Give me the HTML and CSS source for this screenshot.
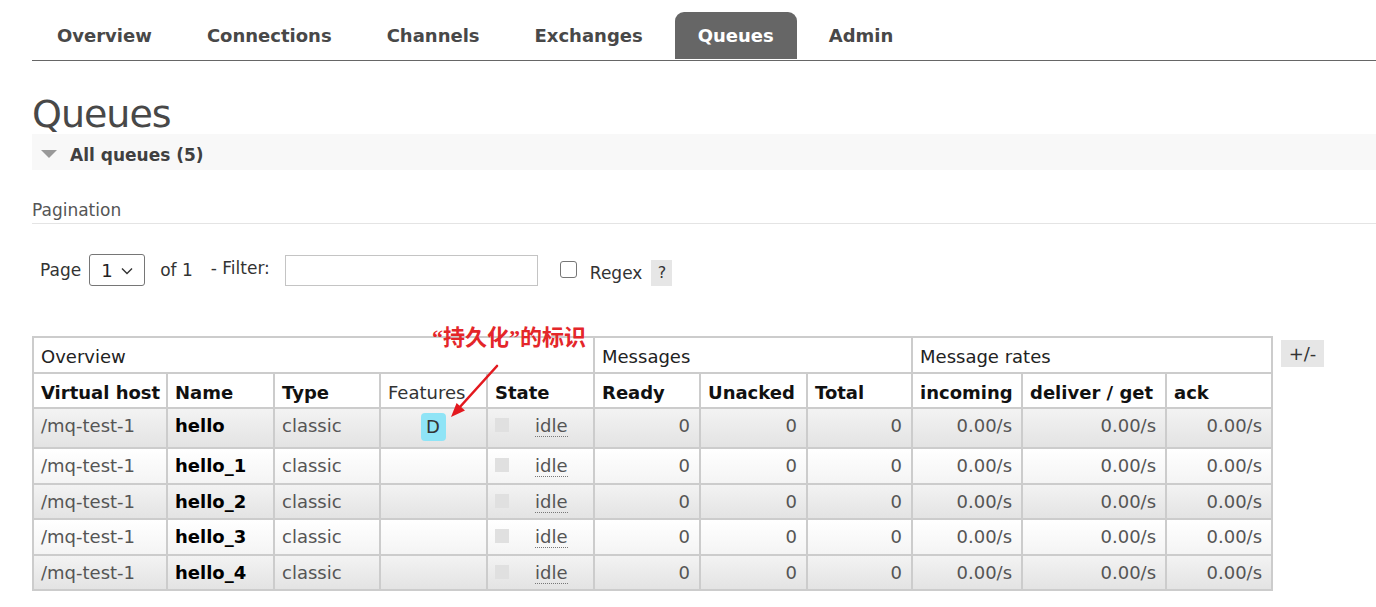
FILE: index.html
```html
<!DOCTYPE html>
<html lang="en">
<head>
<meta charset="utf-8">
<title>Queues</title>
<link rel="stylesheet" href="styles.css">
</head>
<body>
<div class="page">
  <nav class="tabs">
    <a class="tab">Overview</a>
    <a class="tab">Connections</a>
    <a class="tab">Channels</a>
    <a class="tab">Exchanges</a>
    <a class="tab active">Queues</a>
    <a class="tab">Admin</a>
  </nav>

  <h1 class="title">Queues</h1>

  <div class="section-bar"><span class="tri"></span><span class="section-title">All queues (5)</span></div>

  <h3 class="pag-title">Pagination</h3>

  <div class="filter-row">
    <span class="lbl page-lbl">Page</span>
    <span class="select"><span class="sel-val">1</span><svg class="chev" width="12" height="8" viewBox="0 0 12 8"><polyline points="1,1.5 6,6.5 11,1.5" fill="none" stroke="#333" stroke-width="1.4"/></svg></span>
    <span class="lbl of-lbl">of 1</span>
    <span class="lbl filter-lbl">- Filter:</span>
    <span class="input"></span>
    <span class="checkbox"></span>
    <span class="lbl regex-lbl">Regex</span>
    <span class="help">?</span>
  </div>

  <div class="table-wrap">
    <table class="list">
      <colgroup>
        <col class="c-vhost"><col class="c-name"><col class="c-type"><col class="c-feat"><col class="c-state">
        <col class="c-ready"><col class="c-unacked"><col class="c-total">
        <col class="c-in"><col class="c-deliver"><col class="c-ack">
      </colgroup>
      <thead>
        <tr class="group">
          <th colspan="5">Overview</th>
          <th colspan="3">Messages</th>
          <th colspan="3">Message rates</th>
        </tr>
        <tr>
          <th>Virtual host</th><th>Name</th><th>Type</th><th class="plain">Features</th><th>State</th>
          <th>Ready</th><th>Unacked</th><th>Total</th>
          <th>incoming</th><th>deliver / get</th><th>ack</th>
        </tr>
      </thead>
      <tbody>
        <tr>
          <td>/mq-test-1</td><td class="qname">hello</td><td>classic</td>
          <td class="feat"><span class="badge">D</span></td>
          <td><span class="sq"></span><span class="idle">idle</span></td>
          <td class="num">0</td><td class="num">0</td><td class="num">0</td>
          <td class="num">0.00/s</td><td class="num">0.00/s</td><td class="num">0.00/s</td>
        </tr>
        <tr>
          <td>/mq-test-1</td><td class="qname">hello_1</td><td>classic</td>
          <td class="feat"></td>
          <td><span class="sq"></span><span class="idle">idle</span></td>
          <td class="num">0</td><td class="num">0</td><td class="num">0</td>
          <td class="num">0.00/s</td><td class="num">0.00/s</td><td class="num">0.00/s</td>
        </tr>
        <tr>
          <td>/mq-test-1</td><td class="qname">hello_2</td><td>classic</td>
          <td class="feat"></td>
          <td><span class="sq"></span><span class="idle">idle</span></td>
          <td class="num">0</td><td class="num">0</td><td class="num">0</td>
          <td class="num">0.00/s</td><td class="num">0.00/s</td><td class="num">0.00/s</td>
        </tr>
        <tr>
          <td>/mq-test-1</td><td class="qname">hello_3</td><td>classic</td>
          <td class="feat"></td>
          <td><span class="sq"></span><span class="idle">idle</span></td>
          <td class="num">0</td><td class="num">0</td><td class="num">0</td>
          <td class="num">0.00/s</td><td class="num">0.00/s</td><td class="num">0.00/s</td>
        </tr>
        <tr>
          <td>/mq-test-1</td><td class="qname">hello_4</td><td>classic</td>
          <td class="feat"></td>
          <td><span class="sq"></span><span class="idle">idle</span></td>
          <td class="num">0</td><td class="num">0</td><td class="num">0</td>
          <td class="num">0.00/s</td><td class="num">0.00/s</td><td class="num">0.00/s</td>
        </tr>
      </tbody>
    </table>
    <span class="toggle">+/-</span>
  </div>

  <div class="note"><span class="q">“</span>持久化<span class="q">”</span>的标识</div>
  <svg class="arrow" width="66" height="66" viewBox="0 0 66 66">
    <line x1="57" y1="6" x2="19" y2="48" stroke="#e3191f" stroke-width="2.6" stroke-linecap="round"/>
    <polygon points="11,57 25,50.6 16.6,43" fill="#e3191f"/>
  </svg>
</div>
</body>
</html>
```

FILE: styles.css
```css
* { box-sizing: border-box; }

html, body {
  margin: 0;
  padding: 0;
  background: #fff;
}

body {
  font-family: "DejaVu Sans", Verdana, sans-serif;
  color: #484848;
}

.page {
  position: relative;
  padding: 12px 0 0 32px;
  height: 607px;
  overflow: hidden;
}

/* ---------- tabs ---------- */
.tabs {
  display: flex;
  height: 49px;
  padding-left: 2px;
  border-bottom: 1px solid #666;
}

.tab {
  display: block;
  height: 48px;
  padding: 0 23px;
  margin-right: 9px;
  font-size: 18px;
  font-weight: bold;
  line-height: 48px;
  color: #484848;
}

.tab.active {
  background: #666;
  color: #fff;
  border-radius: 9px 9px 0 0;
  height: 47px;
}

/* ---------- title ---------- */
.title {
  margin: 33px 0 0;
  font-size: 38px;
  font-weight: normal;
  letter-spacing: -1px;
  line-height: 40px;
  color: #484848;
}

.section-bar {
  display: flex;
  align-items: center;
  height: 36px;
  padding-top: 6px;
  background: #f8f8f8;
}

.tri {
  width: 0;
  height: 0;
  margin: -3px 13px 0 9px;
  border-left: 8px solid transparent;
  border-right: 8px solid transparent;
  border-top: 8px solid #999;
}

.section-title {
  font-size: 17px;
  font-weight: bold;
  line-height: 20px;
  color: #404040;
}

.pag-title {
  margin: 30px 0 0;
  padding-bottom: 3px;
  font-size: 17px;
  font-weight: normal;
  line-height: 20px;
  color: #555;
  border-bottom: 1px solid #e4e4e4;
}

/* ---------- filter row ---------- */
.filter-row {
  display: flex;
  align-items: center;
  height: 32px;
  margin-top: 30px;
  font-size: 17px;
  color: #333;
}

.lbl { line-height: 20px; }
.page-lbl { margin-left: 8px; }

.select {
  display: flex;
  align-items: center;
  justify-content: space-between;
  width: 56px;
  height: 32px;
  margin-left: 8px;
  padding: 0 11px 0 11px;
  border: 1px solid #767676;
  border-radius: 3px;
  background: #fff;
  font-size: 18px;
  color: #222;
}

.chev { margin-top: 2px; }

.of-lbl { margin-left: 15px; }
.filter-lbl { margin-left: 18px; margin-bottom: 5px; }

.input {
  width: 253px;
  height: 31px;
  margin-left: 15px;
  border: 1px solid #c4c4c4;
  background: #fff;
}

.checkbox {
  width: 17px;
  height: 17px;
  margin-left: 22px;
  margin-bottom: 2px;
  border: 1px solid #767676;
  border-radius: 3px;
  background: #fff;
}

.regex-lbl { margin-left: 13px; margin-top: 6px; }

.help {
  width: 21px;
  height: 26px;
  margin-left: 9px;
  margin-top: 6px;
  background: #e6e6e6;
  font-size: 16px;
  line-height: 26px;
  text-align: center;
  color: #333;
}

/* ---------- table ---------- */
.table-wrap {
  display: flex;
  align-items: flex-start;
  margin-top: 50px;
}

.list {
  border-collapse: collapse;
  table-layout: fixed;
  width: 1239px;
  font-size: 18px;
}

.c-vhost { width: 134px; }
.c-name { width: 107px; }
.c-type { width: 106px; }
.c-feat { width: 107px; }
.c-state { width: 107px; }
.c-ready { width: 106px; }
.c-unacked { width: 107px; }
.c-total { width: 105px; }
.c-in { width: 110px; }
.c-deliver { width: 144px; }
.c-ack { width: 106px; }

.list th,
.list td {
  border: 2px solid #ccc;
  padding: 6px 9px 6px 7px;
  line-height: 21.5px;
  text-align: left;
  vertical-align: top;
  white-space: nowrap;
  overflow: hidden;
}

.list th {
  padding-top: 8px;
  padding-bottom: 4px;
  background: #fff;
  font-weight: bold;
  color: #111;
}

.list tr.group th {
  font-weight: normal;
  color: #222;
}

.list th.plain {
  font-weight: normal;
  color: #333;
}

.list td {
  color: #555;
}

.list tbody tr:nth-child(odd) td {
  background: linear-gradient(#f3f3f3, #e3e3e3);
}

.list tbody tr:nth-child(even) td {
  background: linear-gradient(#fff, #f4f4f4);
}

.list td.qname {
  font-weight: bold;
  color: #000;
}

.list td.num { text-align: right; }
.list td.feat { text-align: center; }

.badge {
  display: inline-block;
  vertical-align: top;
  width: 25px;
  height: 28px;
  margin-top: -2px;
  margin-left: 1px;
  line-height: 28px;
  text-align: center;
  background: #8fe4f6;
  border-radius: 4px;
  color: #333;
}

.sq {
  display: inline-block;
  width: 14px;
  height: 14px;
  margin-right: 26px;
  background: #e0e0e0;
}

.idle {
  border-bottom: 1px dotted #777;
}

.toggle {
  width: 43px;
  height: 27px;
  margin: 4px 0 0 8px;
  background: #e6e6e6;
  font-size: 18px;
  line-height: 27px;
  text-align: center;
  color: #333;
}

/* ---------- annotation overlay ---------- */
.note {
  position: absolute;
  left: 432px;
  top: 322px;
  font-family: "Noto Sans CJK SC", sans-serif;
  font-size: 22px;
  font-weight: bold;
  line-height: 26px;
  color: #e4262a;
  white-space: nowrap;
}

.note .q {
  font-family: "Liberation Serif", serif;
}

.arrow {
  position: absolute;
  left: 440px;
  top: 360px;
}
```
